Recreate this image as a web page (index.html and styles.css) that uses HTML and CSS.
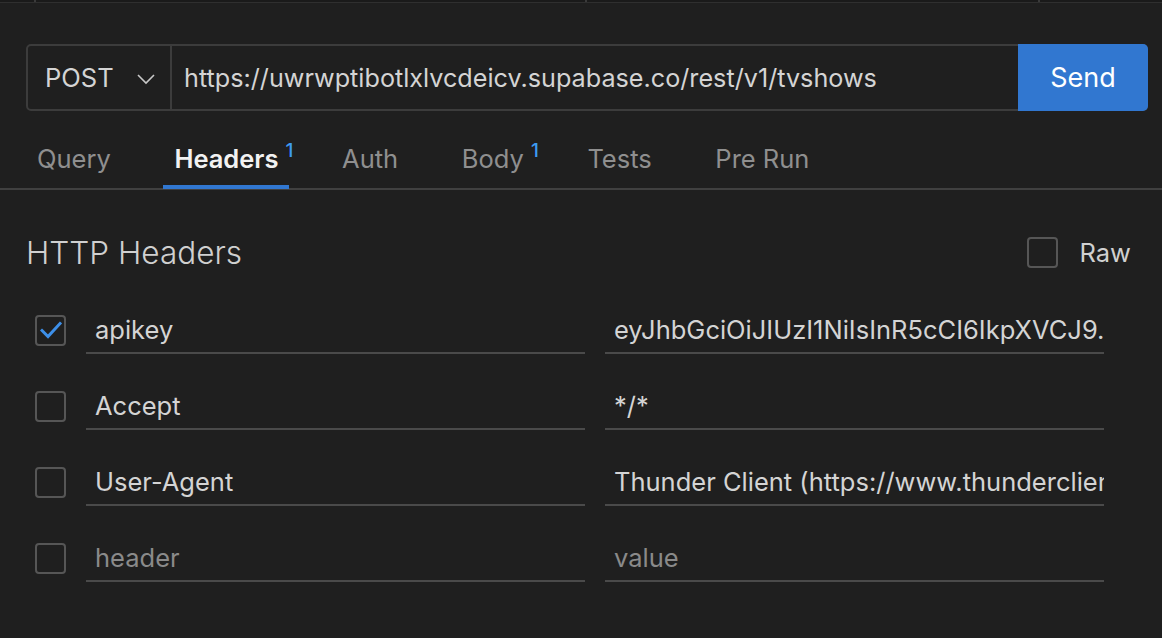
FILE: index.html
```html
<!DOCTYPE html>
<html>
<head>
<meta charset="utf-8">
<link rel="stylesheet" href="styles.css">
</head>
<body>
<div class="topbar">
  <div class="seg seg1"></div>
  <div class="seg seg2"></div>
  <div class="seg seg3"></div>
  <div class="seg seg4"></div>
</div>
<main class="panel">
  <div class="urlbar">
    <div class="method">
      <span>POST</span>
      <svg class="chev" width="20" height="12" viewBox="0 0 20 12"><path d="M2 2 L10 10 L18 2" fill="none" stroke="#c8c8c8" stroke-width="1.6"/></svg>
    </div>
    <div class="url">https://uwrwptibotlxlvcdeicv.supabase.co/rest/v1/tvshows</div>
    <button class="send">Send</button>
  </div>
  <nav class="tabs">
    <div class="tab">Query</div>
    <div class="tab active">Headers<sup class="badge">1</sup></div>
    <div class="tab">Auth</div>
    <div class="tab">Body<sup class="badge">1</sup></div>
    <div class="tab">Tests</div>
    <div class="tab">Pre Run</div>
  </nav>
  <section class="headers">
    <div class="title-row">
      <h2 class="title">HTTP Headers</h2>
      <label class="raw"><span class="box"></span><span>Raw</span></label>
    </div>
    <div class="row">
      <span class="box checked"><svg width="22" height="18" viewBox="0 0 22 18"><path d="M2 9.5 L8 15.5 L20 2.5" fill="none" stroke="#3d8fe8" stroke-width="3" stroke-linecap="square"/></svg></span>
      <div class="field">apikey</div>
      <div class="field">eyJhbGciOiJIUzI1NiIsInR5cCI6IkpXVCJ9.</div>
    </div>
    <div class="row">
      <span class="box"></span>
      <div class="field">Accept</div>
      <div class="field">*/*</div>
    </div>
    <div class="row">
      <span class="box"></span>
      <div class="field">User-Agent</div>
      <div class="field">Thunder Client (https://www.thunderclient.com)</div>
    </div>
    <div class="row">
      <span class="box"></span>
      <div class="field placeholder">header</div>
      <div class="field placeholder">value</div>
    </div>
  </section>
</main>
</body>
</html>
```
FILE: styles.css
```css
* { box-sizing: border-box; }
html, body { margin: 0; padding: 0; }
body {
  background: #1f1f1f;
  color: #cccccc;
  font-family: Inter, "Noto Sans", sans-serif;
  font-size: 25.5px;
  width: 1162px;
  height: 638px;
  overflow: hidden;
}
.topbar {
  display: flex;
  gap: 2px;
  height: 3px;
  background: #3a3a3a;
  border-bottom: 1px solid #2f2f2f;
}
.seg { background: #1a1a1a; height: 2px; }
.seg1 { width: 34px; }
.seg2 { width: 549px; }
.seg3 { width: 451px; }
.seg4 { flex: 1; }

.panel { padding: 41px 14px 0 26px; }

.urlbar {
  display: flex;
  height: 67px;
  border: 2px solid #3c3c3c;
  border-radius: 5px;
}
.method {
  width: 144px;
  display: flex;
  align-items: center;
  justify-content: space-between;
  padding: 0 14px 0 17px;
  border-right: 2px solid #3c3c3c;
  color: #d4d4d4;
}
.chev { margin-top: 2px; }
.url {
  flex: 1;
  display: flex;
  align-items: center;
  padding-left: 12px;
  color: #d4d4d4;
  font-size: 25.2px;
}
.send {
  width: 130px;
  margin: -2px -2px -2px 0;
  border: none;
  border-radius: 0 5px 5px 0;
  background: #3177d0;
  color: #ffffff;
  font-family: inherit;
  font-size: 27px;
}

.tabs {
  display: flex;
  gap: 41.6px;
  margin: 0 -14px 0 -26px;
  padding: 33px 0 0 26px;
  border-bottom: 2px solid #404040;
}
.tab {
  position: relative;
  padding: 0 11px 10px;
  line-height: 1.2;
  color: #8f8f8f;
  border-bottom: 4px solid transparent;
  margin-bottom: -1px;
}
.tab.active {
  color: #f2f2f2;
  font-weight: 600;
  border-bottom-color: #3177d0;
}
.badge {
  position: absolute;
  top: -4px;
  right: -4px;
  font-size: 19px;
  font-weight: 500;
  color: #3d9bf0;
}

.headers { padding-top: 44px; }
.title-row {
  display: flex;
  align-items: center;
  justify-content: space-between;
  margin-bottom: 35px;
  padding-right: 17px;
}
.title {
  margin: 0;
  font-size: 31.5px;
  font-weight: 300;
  color: #d0d0d0;
  line-height: 1.2;
}
.raw {
  display: flex;
  align-items: center;
  gap: 22px;
  color: #d0d0d0;
}
.box {
  width: 31px;
  height: 31px;
  border: 2px solid #565656;
  border-radius: 4px;
  display: flex;
  align-items: center;
  justify-content: center;
  flex: none;
}
.row {
  display: flex;
  align-items: center;
  gap: 20px;
  padding-left: 9px;
  margin-bottom: 28px;
}
.field {
  width: 499px;
  height: 48px;
  display: flex;
  align-items: center;
  padding: 0 9px;
  border-bottom: 2px solid #4a4a4a;
  color: #d4d4d4;
  white-space: nowrap;
  overflow: hidden;
}
.field.placeholder { color: #8a8a8a; }
```
